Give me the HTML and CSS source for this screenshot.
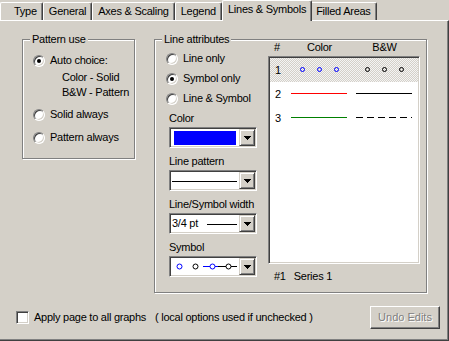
FILE: index.html
```html
<!DOCTYPE html>
<html lang="en">
<head>
    <meta charset="UTF-8">
    <meta name="viewport" content="width=device-width, initial-scale=1.0">
    <title>Lines &amp; Symbols</title>
    <link rel="stylesheet" href="styles.css">
</head>
<body>
    <div class="tabs">
        <div class="tab tab-first">Type</div>
        <div class="tab">General</div>
        <div class="tab">Axes &amp; Scaling</div>
        <div class="tab">Legend</div>
        <div class="tab active">Lines &amp; Symbols</div>
        <div class="tab">Filled Areas</div>
    </div>

    <div class="panel">
        <div class="groups">
            <fieldset class="group pattern">
                <legend>Pattern use</legend>
                <div class="pattern-body">
                    <div class="opt"><span class="radio checked"></span>Auto choice:</div>
                    <div class="note">Color - Solid<br>B&amp;W - Pattern</div>
                    <div class="opt"><span class="radio"></span>Solid always</div>
                    <div class="opt"><span class="radio"></span>Pattern always</div>
                </div>
            </fieldset>

            <fieldset class="group attrs">
                <legend>Line attributes</legend>
                <div class="attrs-body">
                    <div class="attrs-left">
                        <div class="opt"><span class="radio"></span>Line only</div>
                        <div class="opt"><span class="radio checked"></span>Symbol only</div>
                        <div class="opt"><span class="radio"></span>Line &amp; Symbol</div>

                        <div class="field-label">Color</div>
                        <div class="combo">
                            <div class="combo-value"><span class="swatch"></span></div>
                            <span class="drop"><svg width="7" height="4" viewBox="0 0 7 4"><path d="M0 0h7v1H0zM1 1h5v1H1zM2 2h3v1H2zM3 3h1v1H3z"/></svg></span>
                        </div>

                        <div class="field-label">Line pattern</div>
                        <div class="combo">
                            <div class="combo-value"><span class="rule rule-full"></span></div>
                            <span class="drop"><svg width="7" height="4" viewBox="0 0 7 4"><path d="M0 0h7v1H0zM1 1h5v1H1zM2 2h3v1H2zM3 3h1v1H3z"/></svg></span>
                        </div>

                        <div class="field-label">Line/Symbol width</div>
                        <div class="combo">
                            <div class="combo-value"><span class="combo-text">3/4 pt</span><span class="rule rule-short"></span></div>
                            <span class="drop"><svg width="7" height="4" viewBox="0 0 7 4"><path d="M0 0h7v1H0zM1 1h5v1H1zM2 2h3v1H2zM3 3h1v1H3z"/></svg></span>
                        </div>

                        <div class="field-label">Symbol</div>
                        <div class="combo">
                            <div class="combo-value">
                                <svg width="68" height="17" viewBox="0 0 68 17">
                                    <line x1="32" y1="8.5" x2="47" y2="8.5" stroke="#0000ff"/>
                                    <line x1="47" y1="8.5" x2="66" y2="8.5" stroke="#000"/>
                                    <circle cx="8.5" cy="8.5" r="2.5" fill="#fff" stroke="#0000ff"/>
                                    <circle cx="24.5" cy="8.5" r="2.5" fill="#fff" stroke="#000"/>
                                    <circle cx="41.5" cy="8.5" r="2.5" fill="#fff" stroke="#0000ff"/>
                                    <circle cx="57.5" cy="8.5" r="2.5" fill="#fff" stroke="#000"/>
                                </svg>
                            </div>
                            <span class="drop"><svg width="7" height="4" viewBox="0 0 7 4"><path d="M0 0h7v1H0zM1 1h5v1H1zM2 2h3v1H2zM3 3h1v1H3z"/></svg></span>
                        </div>
                    </div>

                    <div class="series">
                        <div class="series-head">
                            <span class="col-num">#</span>
                            <span class="col">Color</span>
                            <span class="col">B&amp;W</span>
                        </div>
                        <div class="series-list">
                            <div class="series-row selected">
                                <span class="series-num">1</span>
                                <svg class="sample" width="57" height="24" viewBox="0 0 57 24">
                                    <g fill="none" stroke="#0000ff">
                                        <circle cx="11.5" cy="11.5" r="2"/>
                                        <circle cx="28.5" cy="11.5" r="2"/>
                                        <circle cx="45.5" cy="11.5" r="2"/>
                                    </g>
                                </svg>
                                <svg class="sample" width="57" height="24" viewBox="0 0 57 24">
                                    <g fill="none" stroke="#000">
                                        <circle cx="11.5" cy="11.5" r="2"/>
                                        <circle cx="28.5" cy="11.5" r="2"/>
                                        <circle cx="45.5" cy="11.5" r="2"/>
                                    </g>
                                </svg>
                            </div>
                            <div class="series-row">
                                <span class="series-num">2</span>
                                <svg class="sample" width="57" height="24" viewBox="0 0 57 24">
                                    <line x1="0" y1="11.5" x2="56" y2="11.5" stroke="#ff0000"/>
                                </svg>
                                <svg class="sample" width="57" height="24" viewBox="0 0 57 24">
                                    <line x1="0" y1="11.5" x2="56" y2="11.5" stroke="#000"/>
                                </svg>
                            </div>
                            <div class="series-row">
                                <span class="series-num">3</span>
                                <svg class="sample" width="57" height="24" viewBox="0 0 57 24">
                                    <line x1="0" y1="11.5" x2="56" y2="11.5" stroke="#008000"/>
                                </svg>
                                <svg class="sample" width="57" height="24" viewBox="0 0 57 24">
                                    <line x1="0" y1="11.5" x2="56" y2="11.5" stroke="#000" stroke-dasharray="7 4"/>
                                </svg>
                            </div>
                        </div>
                        <div class="series-name">#1<span class="series-title">Series 1</span></div>
                    </div>
                </div>
            </fieldset>
        </div>

        <div class="footer">
            <span class="check"></span>Apply page to all graphs
            <span class="hint">( local options used if unchecked )</span>
            <button class="btn" disabled>Undo Edits</button>
        </div>
    </div>
</body>
</html>
```

FILE: styles.css
```css
body {
    margin: 0;
    width: 449px;
    height: 341px;
    overflow: hidden;
    background-color: #d4d0c8;
    color: #000;
    font: 11px/13px "Liberation Sans", Arial, sans-serif;
    letter-spacing: -0.25px;
}

/* tab strip */
.tabs {
    display: flex;
    align-items: flex-end;
    height: 20px;
}
.tab {
    height: 18px;
    box-sizing: border-box;
    padding: 0 5px;
    border: 1px solid #fff;
    border-bottom: 0;
    border-right-color: #404040;
    border-radius: 2px 2px 0 0;
    box-shadow: inset -1px 0 #808080;
    line-height: 17px;
    white-space: nowrap;
}
.tab-first {
    padding-left: 13px;
}
.tab.active {
    position: relative;
    z-index: 1;
    height: 21px;
    margin: 0 -2px -1px 0;
    background-color: #d4d0c8;
}

/* page */
.panel {
    height: 321px;
    box-sizing: border-box;
    padding-top: 12px;
    border-top: 1px solid #fff;
    border-right: 1px solid #404040;
    border-bottom: 1px solid #404040;
    box-shadow: inset -1px -1px #808080;
}
.groups {
    display: flex;
    align-items: flex-start;
    gap: 19px;
    padding-left: 22px;
}
.group {
    margin: 0;
    padding: 0;
    min-width: 0;
    box-sizing: border-box;
    border: 1px solid #808080;
    box-shadow: inset 1px 1px #fff, 1px 1px #fff;
}
.group legend {
    margin-left: 7px;
    padding: 0 2px;
    background-color: #d4d0c8;
}

.opt {
    display: flex;
    align-items: center;
    height: 13px;
    white-space: nowrap;
}
.radio {
    display: flex;
    align-items: center;
    justify-content: center;
    flex: none;
    width: 12px;
    height: 12px;
    box-sizing: border-box;
    margin-right: 5px;
    border: 1px solid;
    border-color: #808080 #fff #fff #808080;
    border-radius: 50%;
    background-color: #fff;
    box-shadow: inset 1px 1px #404040, inset -1px -1px #d4d0c8;
}
.radio.checked::after {
    content: "";
    width: 4px;
    height: 4px;
    border-radius: 50%;
    background-color: #000;
}

/* pattern use */
.pattern {
    width: 113px;
    height: 126px;
}
.pattern-body {
    padding-left: 10px;
}
.pattern-body .opt:first-child {
    margin-top: 8px;
}
.note {
    margin: 3px 0 0 29px;
    line-height: 15px;
}
.note + .opt {
    margin-top: 8px;
}
.pattern-body .opt + .opt {
    margin-top: 10px;
}

/* line attributes */
.attrs {
    width: 273px;
    height: 260px;
}
.attrs-body {
    display: flex;
    padding: 0 6px 0 11px;
}
.attrs-left {
    width: 91px;
}
.attrs-left .opt {
    margin-top: 7px;
}
.attrs-left .opt:first-child {
    margin-top: 6px;
}
.field-label {
    margin: 7px 0 0 3px;
    white-space: nowrap;
}
.combo {
    display: flex;
    width: 88px;
    height: 21px;
    box-sizing: border-box;
    margin: 2px 0 0 3px;
    border: 1px solid;
    border-color: #808080 #fff #fff #808080;
    background-color: #fff;
    box-shadow: inset 1px 1px #404040, inset -1px -1px #d4d0c8;
    padding: 1px;
}
.combo-value {
    display: flex;
    align-items: center;
    flex: 1;
    min-width: 0;
}
.swatch {
    flex: 1;
    align-self: stretch;
    margin: 2px 3px 1px;
    background-color: #0000ff;
}
.rule {
    flex: 1;
    height: 0;
    border-top: 1px solid #000;
}
.rule-full {
    margin: 1px 2px 0 1px;
}
.rule-short {
    margin: 1px 2px 0 9px;
}
.combo-text {
    padding-left: 1px;
    white-space: nowrap;
}
.drop {
    display: flex;
    align-items: center;
    justify-content: center;
    width: 16px;
    box-sizing: border-box;
    border: 1px solid;
    border-color: #d4d0c8 #404040 #404040 #d4d0c8;
    background-color: #d4d0c8;
    box-shadow: inset 1px 1px #fff, inset -1px -1px #808080;
}
.drop svg {
    display: block;
    fill: #000;
}

/* series list */
.series {
    width: 152px;
    margin: -5px 0 0 11px;
}
.series-head {
    display: flex;
    height: 13px;
}
.col-num {
    width: 23px;
    box-sizing: border-box;
    padding-left: 6px;
}
.col {
    width: 57px;
    text-align: center;
}
.col + .col {
    margin-left: 8px;
}
.series-list {
    height: 208px;
    box-sizing: border-box;
    margin-top: 2px;
    border: 1px solid;
    border-color: #808080 #fff #fff #808080;
    background-color: #fff;
    box-shadow: inset 1px 1px #404040, inset -1px -1px #d4d0c8;
    padding: 1px;
}
.series-row {
    display: flex;
    height: 24px;
}
.series-row.selected {
    background: repeating-conic-gradient(#d4d0c8 0 25%, #f4f4f4 0 50%) 0 0 / 2px 2px;
}
.series-num {
    width: 21px;
    box-sizing: border-box;
    padding-left: 5px;
    line-height: 24px;
}
.sample {
    display: block;
}
.sample + .sample {
    margin-left: 8px;
}
.series-name {
    margin: 6px 0 0 6px;
}
.series-title {
    margin-left: 8px;
}

/* bottom row */
.footer {
    display: flex;
    align-items: center;
    height: 23px;
    margin-top: 13px;
    padding: 0 8px 0 16px;
    white-space: nowrap;
}
.check {
    width: 13px;
    height: 13px;
    box-sizing: border-box;
    margin-right: 5px;
    border: 1px solid;
    border-color: #808080 #fff #fff #808080;
    background-color: #fff;
    box-shadow: inset 1px 1px #404040, inset -1px -1px #d4d0c8;
}
.hint {
    margin-left: 9px;
}
.btn {
    width: 70px;
    height: 23px;
    margin-left: auto;
    padding: 0;
    border: 1px solid;
    border-color: #fff #404040 #404040 #fff;
    border-radius: 0;
    background-color: #d4d0c8;
    box-shadow: inset -1px -1px #808080;
    color: #808080;
    text-shadow: 1px 1px #fff;
    font: inherit;
}
```
